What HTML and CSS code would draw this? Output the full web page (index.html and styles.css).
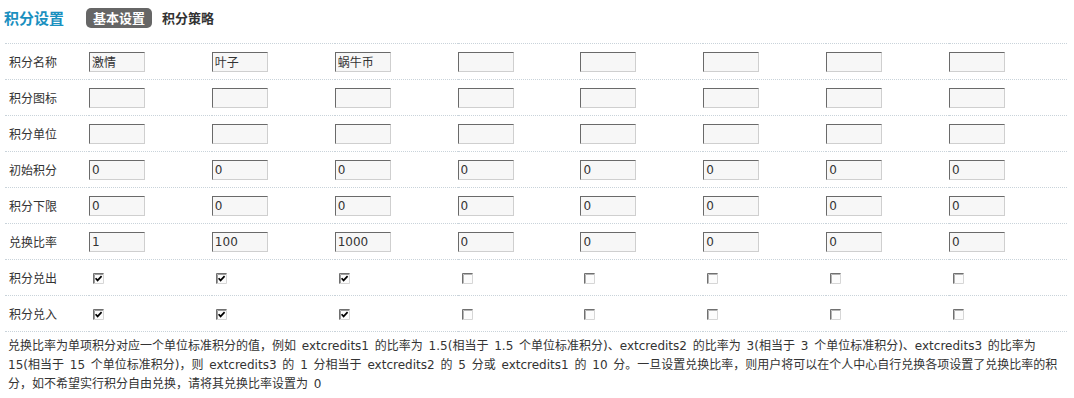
FILE: index.html
```html
<!DOCTYPE html>
<html lang="zh-CN">
<head>
<meta charset="utf-8">
<title>积分设置</title>
<link rel="stylesheet" href="styles.css">
</head>
<body>
<div class="page">
  <div class="itemtitle">
    <h3 class="title">积分设置</h3>
    <ul class="tabs">
      <li class="tab current">基本设置</li>
      <li class="tab">积分策略</li>
    </ul>
  </div>
  <table class="tb">
    <colgroup>
      <col class="c-label"><col class="c-item"><col class="c-item"><col class="c-item"><col class="c-item"><col class="c-item"><col class="c-item"><col class="c-item"><col>
    </colgroup>
    <tbody>
      <tr>
        <td class="lbl">积分名称</td>
        <td><input class="txt" value="激情"></td>
        <td><input class="txt" value="叶子"></td>
        <td><input class="txt" value="蜗牛币"></td>
        <td><input class="txt" value=""></td>
        <td><input class="txt" value=""></td>
        <td><input class="txt" value=""></td>
        <td><input class="txt" value=""></td>
        <td><input class="txt" value=""></td>
      </tr>
      <tr>
        <td class="lbl">积分图标</td>
        <td><input class="txt" value=""></td>
        <td><input class="txt" value=""></td>
        <td><input class="txt" value=""></td>
        <td><input class="txt" value=""></td>
        <td><input class="txt" value=""></td>
        <td><input class="txt" value=""></td>
        <td><input class="txt" value=""></td>
        <td><input class="txt" value=""></td>
      </tr>
      <tr>
        <td class="lbl">积分单位</td>
        <td><input class="txt" value=""></td>
        <td><input class="txt" value=""></td>
        <td><input class="txt" value=""></td>
        <td><input class="txt" value=""></td>
        <td><input class="txt" value=""></td>
        <td><input class="txt" value=""></td>
        <td><input class="txt" value=""></td>
        <td><input class="txt" value=""></td>
      </tr>
      <tr>
        <td class="lbl">初始积分</td>
        <td><input class="txt" value="0"></td>
        <td><input class="txt" value="0"></td>
        <td><input class="txt" value="0"></td>
        <td><input class="txt" value="0"></td>
        <td><input class="txt" value="0"></td>
        <td><input class="txt" value="0"></td>
        <td><input class="txt" value="0"></td>
        <td><input class="txt" value="0"></td>
      </tr>
      <tr>
        <td class="lbl">积分下限</td>
        <td><input class="txt" value="0"></td>
        <td><input class="txt" value="0"></td>
        <td><input class="txt" value="0"></td>
        <td><input class="txt" value="0"></td>
        <td><input class="txt" value="0"></td>
        <td><input class="txt" value="0"></td>
        <td><input class="txt" value="0"></td>
        <td><input class="txt" value="0"></td>
      </tr>
      <tr>
        <td class="lbl">兑换比率</td>
        <td><input class="txt" value="1"></td>
        <td><input class="txt" value="100"></td>
        <td><input class="txt" value="1000"></td>
        <td><input class="txt" value="0"></td>
        <td><input class="txt" value="0"></td>
        <td><input class="txt" value="0"></td>
        <td><input class="txt" value="0"></td>
        <td><input class="txt" value="0"></td>
      </tr>
      <tr>
        <td class="lbl">积分兑出</td>
        <td><span class="cb"><svg viewBox="0 0 11 11" width="11" height="11"><rect x="0" y="0" width="11" height="11" fill="#fcfcfc"/><path d="M0.5 11V0.5H11" fill="none" stroke="#707070"/><path d="M1.5 10V1.5H10" fill="none" stroke="#9c9c9c"/><path d="M10.5 0.5V10.5H0.5" fill="none" stroke="#d6d6d6"/><path d="M2.6 5.2L4.6 7.4L8.6 3.2" fill="none" stroke="#000" stroke-width="1.7"/></svg></span></td>
        <td><span class="cb"><svg viewBox="0 0 11 11" width="11" height="11"><rect x="0" y="0" width="11" height="11" fill="#fcfcfc"/><path d="M0.5 11V0.5H11" fill="none" stroke="#707070"/><path d="M1.5 10V1.5H10" fill="none" stroke="#9c9c9c"/><path d="M10.5 0.5V10.5H0.5" fill="none" stroke="#d6d6d6"/><path d="M2.6 5.2L4.6 7.4L8.6 3.2" fill="none" stroke="#000" stroke-width="1.7"/></svg></span></td>
        <td><span class="cb"><svg viewBox="0 0 11 11" width="11" height="11"><rect x="0" y="0" width="11" height="11" fill="#fcfcfc"/><path d="M0.5 11V0.5H11" fill="none" stroke="#707070"/><path d="M1.5 10V1.5H10" fill="none" stroke="#9c9c9c"/><path d="M10.5 0.5V10.5H0.5" fill="none" stroke="#d6d6d6"/><path d="M2.6 5.2L4.6 7.4L8.6 3.2" fill="none" stroke="#000" stroke-width="1.7"/></svg></span></td>
        <td><span class="cb"><svg viewBox="0 0 11 11" width="11" height="11"><rect x="0" y="0" width="11" height="11" fill="#fcfcfc"/><path d="M0.5 11V0.5H11" fill="none" stroke="#707070"/><path d="M1.5 10V1.5H10" fill="none" stroke="#b4b4b4"/><path d="M10.5 0.5V10.5H0.5" fill="none" stroke="#d6d6d6"/></svg></span></td>
        <td><span class="cb"><svg viewBox="0 0 11 11" width="11" height="11"><rect x="0" y="0" width="11" height="11" fill="#fcfcfc"/><path d="M0.5 11V0.5H11" fill="none" stroke="#707070"/><path d="M1.5 10V1.5H10" fill="none" stroke="#b4b4b4"/><path d="M10.5 0.5V10.5H0.5" fill="none" stroke="#d6d6d6"/></svg></span></td>
        <td><span class="cb"><svg viewBox="0 0 11 11" width="11" height="11"><rect x="0" y="0" width="11" height="11" fill="#fcfcfc"/><path d="M0.5 11V0.5H11" fill="none" stroke="#707070"/><path d="M1.5 10V1.5H10" fill="none" stroke="#b4b4b4"/><path d="M10.5 0.5V10.5H0.5" fill="none" stroke="#d6d6d6"/></svg></span></td>
        <td><span class="cb"><svg viewBox="0 0 11 11" width="11" height="11"><rect x="0" y="0" width="11" height="11" fill="#fcfcfc"/><path d="M0.5 11V0.5H11" fill="none" stroke="#707070"/><path d="M1.5 10V1.5H10" fill="none" stroke="#b4b4b4"/><path d="M10.5 0.5V10.5H0.5" fill="none" stroke="#d6d6d6"/></svg></span></td>
        <td><span class="cb"><svg viewBox="0 0 11 11" width="11" height="11"><rect x="0" y="0" width="11" height="11" fill="#fcfcfc"/><path d="M0.5 11V0.5H11" fill="none" stroke="#707070"/><path d="M1.5 10V1.5H10" fill="none" stroke="#b4b4b4"/><path d="M10.5 0.5V10.5H0.5" fill="none" stroke="#d6d6d6"/></svg></span></td>
      </tr>
      <tr>
        <td class="lbl">积分兑入</td>
        <td><span class="cb"><svg viewBox="0 0 11 11" width="11" height="11"><rect x="0" y="0" width="11" height="11" fill="#fcfcfc"/><path d="M0.5 11V0.5H11" fill="none" stroke="#707070"/><path d="M1.5 10V1.5H10" fill="none" stroke="#9c9c9c"/><path d="M10.5 0.5V10.5H0.5" fill="none" stroke="#d6d6d6"/><path d="M2.6 5.2L4.6 7.4L8.6 3.2" fill="none" stroke="#000" stroke-width="1.7"/></svg></span></td>
        <td><span class="cb"><svg viewBox="0 0 11 11" width="11" height="11"><rect x="0" y="0" width="11" height="11" fill="#fcfcfc"/><path d="M0.5 11V0.5H11" fill="none" stroke="#707070"/><path d="M1.5 10V1.5H10" fill="none" stroke="#9c9c9c"/><path d="M10.5 0.5V10.5H0.5" fill="none" stroke="#d6d6d6"/><path d="M2.6 5.2L4.6 7.4L8.6 3.2" fill="none" stroke="#000" stroke-width="1.7"/></svg></span></td>
        <td><span class="cb"><svg viewBox="0 0 11 11" width="11" height="11"><rect x="0" y="0" width="11" height="11" fill="#fcfcfc"/><path d="M0.5 11V0.5H11" fill="none" stroke="#707070"/><path d="M1.5 10V1.5H10" fill="none" stroke="#9c9c9c"/><path d="M10.5 0.5V10.5H0.5" fill="none" stroke="#d6d6d6"/><path d="M2.6 5.2L4.6 7.4L8.6 3.2" fill="none" stroke="#000" stroke-width="1.7"/></svg></span></td>
        <td><span class="cb"><svg viewBox="0 0 11 11" width="11" height="11"><rect x="0" y="0" width="11" height="11" fill="#fcfcfc"/><path d="M0.5 11V0.5H11" fill="none" stroke="#707070"/><path d="M1.5 10V1.5H10" fill="none" stroke="#b4b4b4"/><path d="M10.5 0.5V10.5H0.5" fill="none" stroke="#d6d6d6"/></svg></span></td>
        <td><span class="cb"><svg viewBox="0 0 11 11" width="11" height="11"><rect x="0" y="0" width="11" height="11" fill="#fcfcfc"/><path d="M0.5 11V0.5H11" fill="none" stroke="#707070"/><path d="M1.5 10V1.5H10" fill="none" stroke="#b4b4b4"/><path d="M10.5 0.5V10.5H0.5" fill="none" stroke="#d6d6d6"/></svg></span></td>
        <td><span class="cb"><svg viewBox="0 0 11 11" width="11" height="11"><rect x="0" y="0" width="11" height="11" fill="#fcfcfc"/><path d="M0.5 11V0.5H11" fill="none" stroke="#707070"/><path d="M1.5 10V1.5H10" fill="none" stroke="#b4b4b4"/><path d="M10.5 0.5V10.5H0.5" fill="none" stroke="#d6d6d6"/></svg></span></td>
        <td><span class="cb"><svg viewBox="0 0 11 11" width="11" height="11"><rect x="0" y="0" width="11" height="11" fill="#fcfcfc"/><path d="M0.5 11V0.5H11" fill="none" stroke="#707070"/><path d="M1.5 10V1.5H10" fill="none" stroke="#b4b4b4"/><path d="M10.5 0.5V10.5H0.5" fill="none" stroke="#d6d6d6"/></svg></span></td>
        <td><span class="cb"><svg viewBox="0 0 11 11" width="11" height="11"><rect x="0" y="0" width="11" height="11" fill="#fcfcfc"/><path d="M0.5 11V0.5H11" fill="none" stroke="#707070"/><path d="M1.5 10V1.5H10" fill="none" stroke="#b4b4b4"/><path d="M10.5 0.5V10.5H0.5" fill="none" stroke="#d6d6d6"/></svg></span></td>
      </tr>
      <tr>
        <td class="note" colspan="9">兑换比率为单项积分对应一个单位标准积分的值，例如 extcredits1 的比率为 1.5(相当于 1.5 个单位标准积分)、extcredits2 的比率为 3(相当于 3 个单位标准积分)、extcredits3 的比率为 15(相当于 15 个单位标准积分)，则 extcredits3 的 1 分相当于 extcredits2 的 5 分或 extcredits1 的 10 分。一旦设置兑换比率，则用户将可以在个人中心自行兑换各项设置了兑换比率的积分，如不希望实行积分自由兑换，请将其兑换比率设置为 0</td>
      </tr>
    </tbody>
  </table>
</div>
</body>
</html>
```

FILE: styles.css
```css
html, body {
  margin: 0;
  padding: 0;
  background: #fff;
}

body {
  font-family: "DejaVu Sans", "Noto Sans CJK SC", sans-serif;
  font-size: 12px;
  color: #333;
}

.page {
  width: 1074px;
}

.itemtitle {
  display: flex;
  align-items: center;
  height: 20px;
  padding: 8px 0 15px 4px;
}

.title {
  margin: 0 22px 0 0;
  font-size: 15px;
  font-weight: bold;
  color: #1a90bf;
  line-height: 20px;
  font-family: "Noto Sans CJK SC", sans-serif;
}

.tabs {
  display: flex;
  gap: 3px;
  margin: 0;
  padding: 0;
  list-style: none;
}

.tab {
  height: 20px;
  line-height: 20px;
  padding: 0 7px;
  font-size: 13px;
  font-weight: bold;
  color: #333;
  border-radius: 5px;
  font-family: "Noto Sans CJK SC", sans-serif;
}

.tab.current {
  background: #666;
  color: #fff;
}

.tb {
  margin-left: 5px;
  width: 1062px;
  border-collapse: collapse;
  table-layout: fixed;
}

.c-label {
  width: 84px;
}

.c-item {
  width: 122.86px;
}

.tb td {
  border-top: 1px dotted #c9d3da;
  height: 35px;
  padding: 0;
  vertical-align: middle;
}

.tb td.lbl {
  padding-left: 4px;
  font-family: "Noto Sans CJK SC", sans-serif;
}

.txt {
  display: block;
  box-sizing: border-box;
  width: 56px;
  height: 20px;
  margin: 0;
  padding: 0 2px;
  border: 1px solid;
  border-color: #6a6a6a #cfcfcf #cfcfcf #6a6a6a;
  background: #f7f7f7;
  font-family: "DejaVu Sans", "Noto Sans CJK SC", sans-serif;
  font-size: 12px;
  color: #333;
  outline: none;
}

.cb {
  display: block;
  width: 11px;
  height: 11px;
  margin-left: 4px;
  margin-top: 1px;
}

.cb svg {
  display: block;
}

.tb td.note {
  height: auto;
  padding: 5px 0 7px 3px;
  line-height: 19px;
  word-spacing: 2px;
  vertical-align: top;
}
```
